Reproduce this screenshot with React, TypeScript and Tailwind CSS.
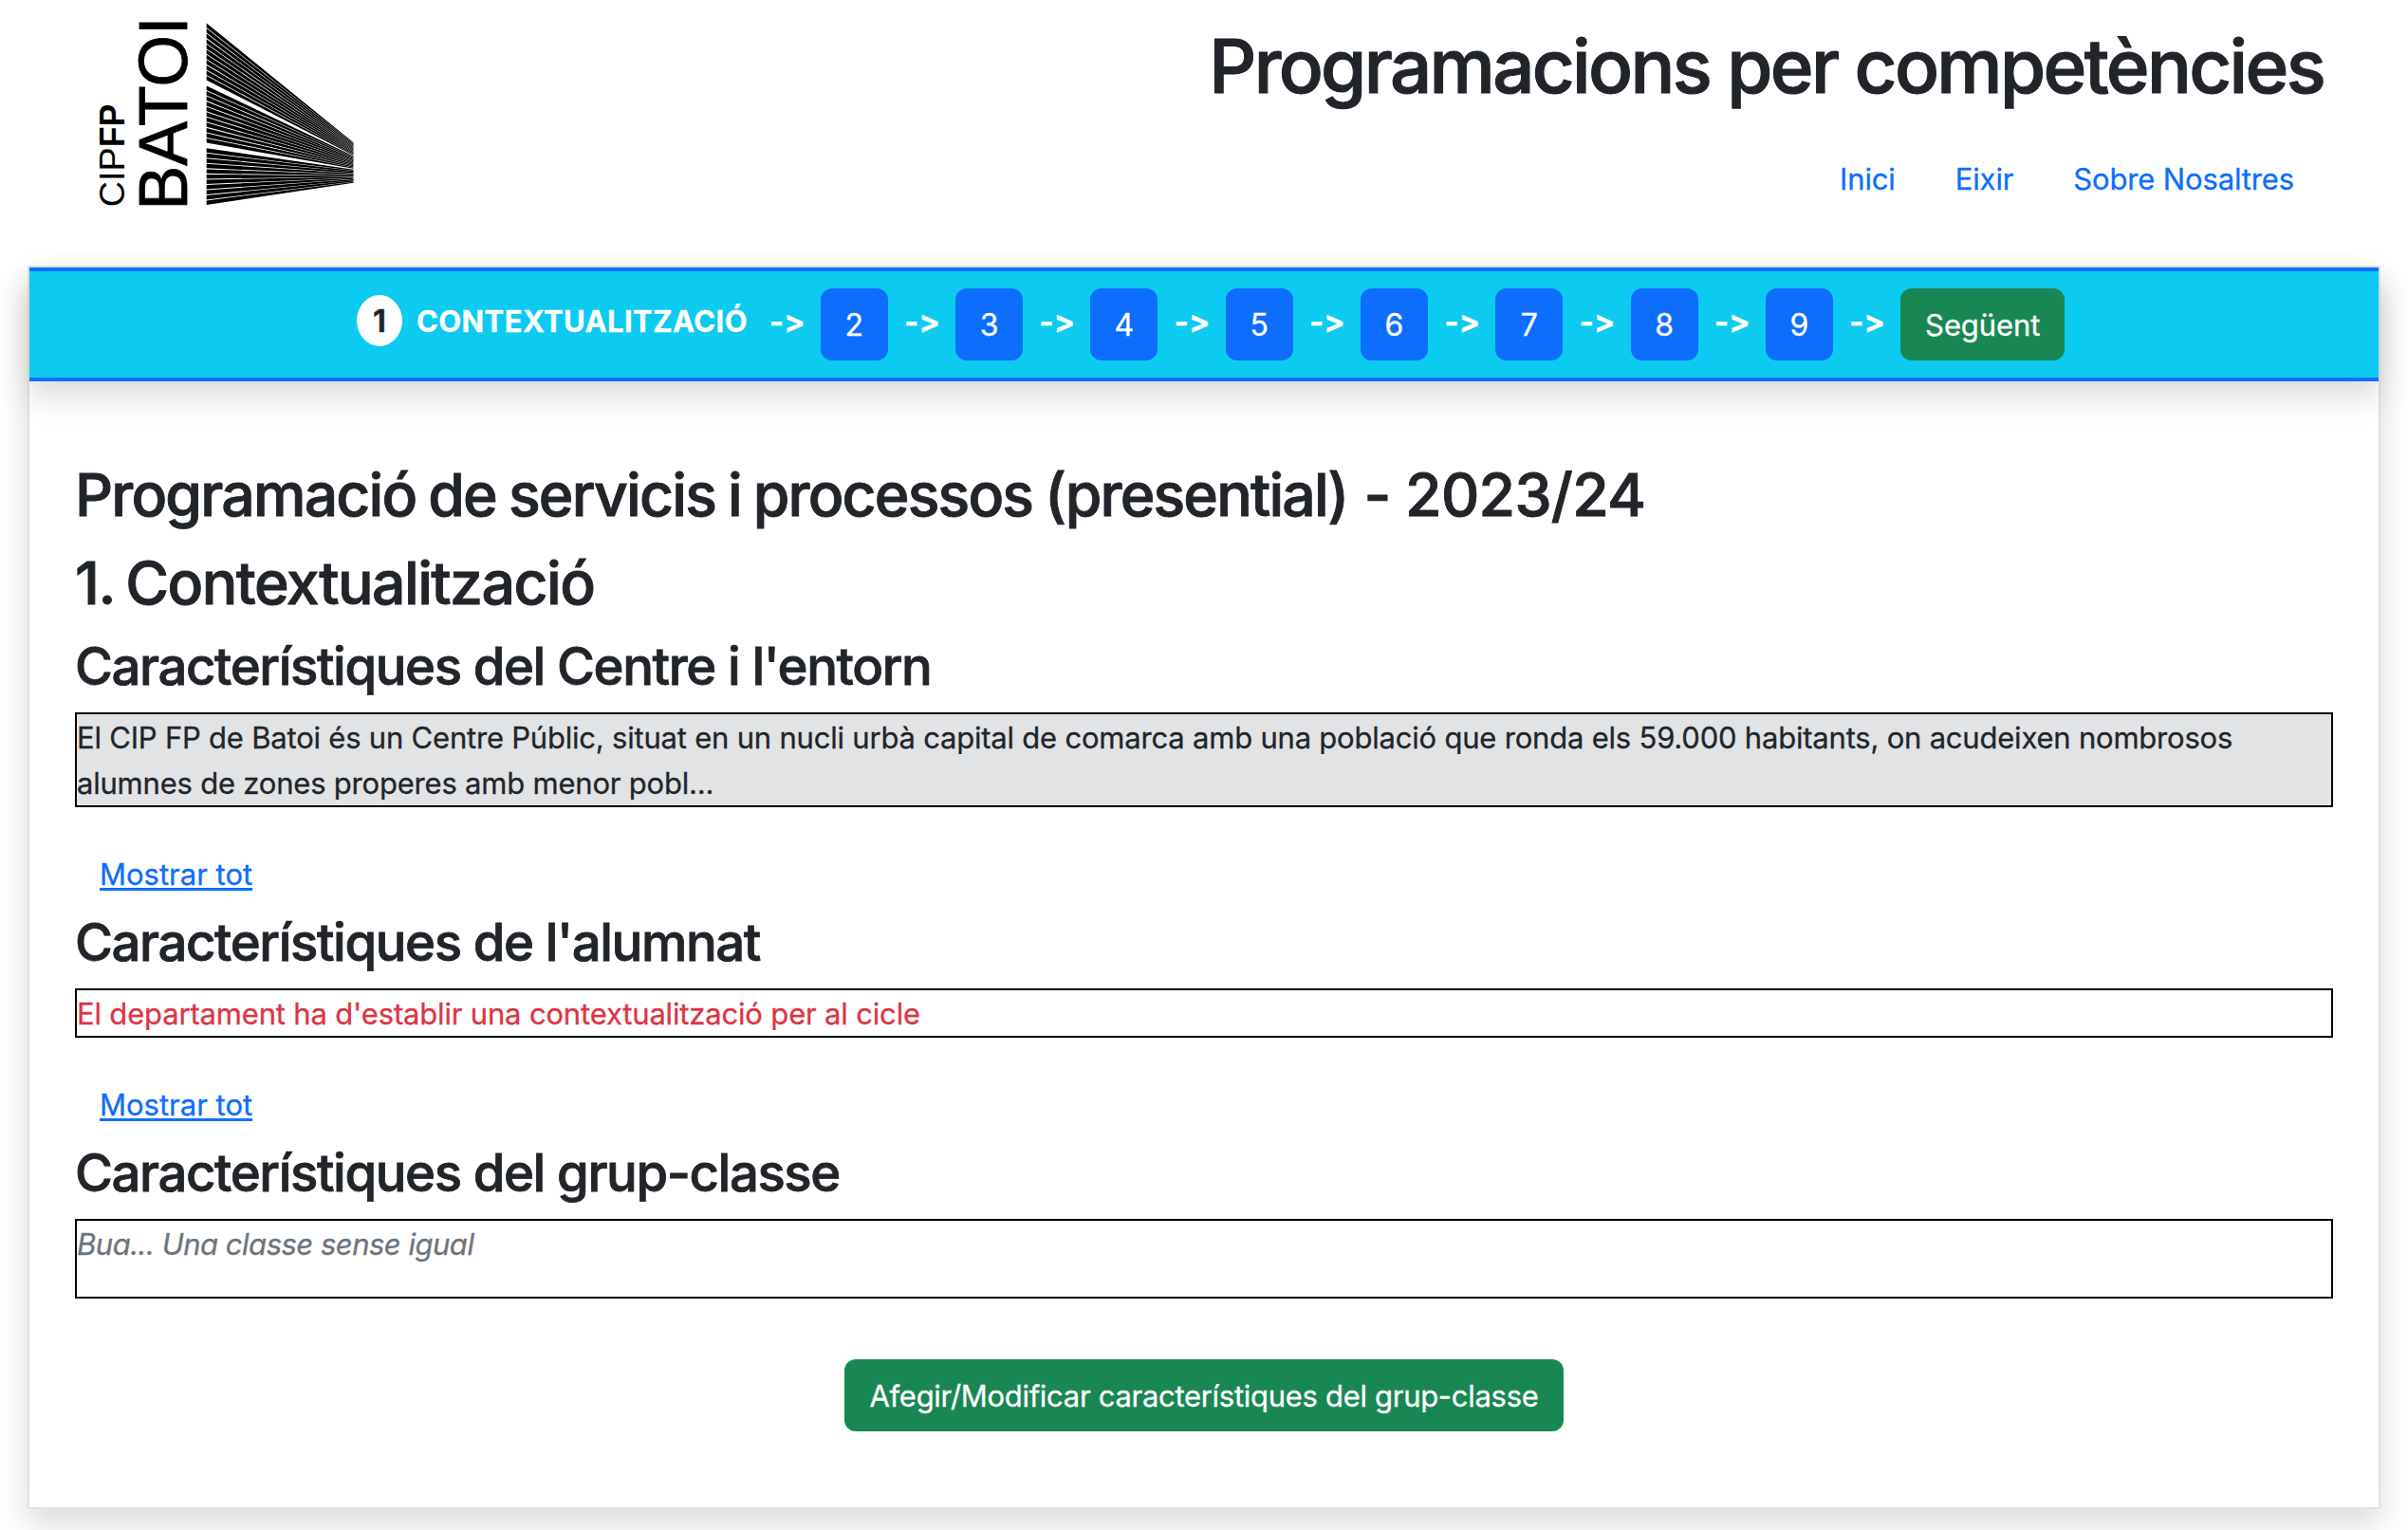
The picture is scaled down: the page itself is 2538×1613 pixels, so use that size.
import React from 'react';

const STRIPES_PER_BLOCK = 11;

// Each block of the fan: left edge top/bottom and right edge top/bottom.
const FAN_BLOCKS = [
  { leftTop: 24.5, leftBottom: 84.5, rightTop: 150.3, rightBottom: 163.8 },
  { leftTop: 90.5, leftBottom: 150.5, rightTop: 164.4, rightBottom: 177.8 },
  { leftTop: 156.3, leftBottom: 216, rightTop: 178.8, rightBottom: 192.7 },
];

function stripePoints(block: (typeof FAN_BLOCKS)[number], index: number) {
  const duty = 0.81;
  const span = STRIPES_PER_BLOCK - 1 + duty;
  const from = index / span;
  const to = (index + duty) / span;
  const at = (a: number, b: number, t: number) => (a + (b - a) * t).toFixed(2);
  return [
    `217.7,${at(block.leftTop, block.leftBottom, from)}`,
    `372.5,${at(block.rightTop, block.rightBottom, from)}`,
    `372.5,${at(block.rightTop, block.rightBottom, to)}`,
    `217.7,${at(block.leftTop, block.leftBottom, to)}`,
  ].join(' ');
}

function Logo() {
  return (
    <svg
      viewBox="90 0 300 240"
      className="ml-[90px] h-[240px] w-[300px]"
      fontFamily='"Liberation Sans", Arial, sans-serif'
      role="img"
      aria-label="CIPFP Batoi"
    >
      <g transform="translate(131.2 218.3) rotate(-90)" fontSize="37.5">
        <text textLength="63" lengthAdjust="spacingAndGlyphs">CIP</text>
        <text x="63" fontWeight="700" textLength="45.5" lengthAdjust="spacingAndGlyphs">FP</text>
      </g>
      <text
        transform="translate(197 221.5) rotate(-90)"
        fontSize="72"
        textLength="204"
        lengthAdjust="spacingAndGlyphs"
        stroke="black"
        strokeWidth="0.8"
      >
        BATOI
      </text>
      {FAN_BLOCKS.map((block) =>
        Array.from({ length: STRIPES_PER_BLOCK }, (_, i) => (
          <polygon key={`${block.leftTop}-${i}`} points={stripePoints(block, i)} />
        )),
      )}
    </svg>
  );
}

function Header() {
  return (
    <header className="flex h-[280px] justify-between">
      <Logo />
      <div className="flex flex-col items-end">
        <h1 className="mt-[22px] mr-[89px] text-[78px] leading-[96px] font-medium tracking-[-2.67px] whitespace-nowrap [-webkit-text-stroke:1.1px]">
          Programacions per competències
        </h1>
        <nav className="mt-[47px] mr-[120px] flex gap-[63px] text-[31px] leading-[48px] tracking-[-0.14px] text-[#0d6efd]">
          <a href="#">Inici</a>
          <a href="#">Eixir</a>
          <a href="#">Sobre Nosaltres</a>
        </nav>
      </div>
    </header>
  );
}

function Arrow() {
  return (
    <span className="mt-[29px] w-[71.3px] shrink-0 pl-px text-center text-[33px] leading-[48px] font-bold text-white">
      -&gt;
    </span>
  );
}

function Steps() {
  return (
    <div className="flex h-[120px] items-start border-y-4 border-[#0d6efd] bg-[#0dcaf0] pl-[345px] shadow-[0_16px_32px_rgba(0,0,0,0.15)]">
      <span className="mt-[25px] flex h-[54px] w-12 items-center justify-center rounded-[50%] bg-white pt-[2px] text-[32px] font-bold">
        1
      </span>
      <span className="mt-[29px] ml-[15px] w-[354.5px] shrink-0 text-[31px] leading-[48px] font-bold tracking-[0.385px] whitespace-nowrap text-white">
        CONTEXTUALITZACIÓ
      </span>
      <Arrow />
      {[2, 3, 4, 5, 6, 7, 8, 9].map((n) => (
        <React.Fragment key={n}>
          <button className="mt-[18px] h-[76px] w-[71px] shrink-0 rounded-xl bg-[#0d6efd] pt-[2px] text-[32px] text-white">
            {n}
          </button>
          <Arrow />
        </React.Fragment>
      ))}
      <button className="mt-[18px] h-[76px] w-[173px] shrink-0 rounded-xl bg-[#198754] pt-[2px] text-[31px] tracking-[-0.1px] text-white">
        Següent
      </button>
    </div>
  );
}

function SectionTitle({ children }: { children: React.ReactNode }) {
  return (
    <h3 className="mb-[15px] text-[54.5px] leading-[67.2px] font-medium tracking-[-1.41px] [-webkit-text-stroke:0.8px]">
      {children}
    </h3>
  );
}

function ShowAll() {
  return (
    <div className="mt-[47px] mb-[14px] pl-[26px] text-[31px] leading-[48px]">
      <a href="#" className="text-[#0d6efd] underline decoration-[3px] underline-offset-[3px]">
        Mostrar tot
      </a>
    </div>
  );
}

export default function App() {
  return (
    <div className="h-[1613px] w-[2538px] overflow-hidden bg-white font-['Inter',sans-serif] text-[#212529] [font-feature-settings:'calt'_0] [-webkit-text-stroke:0.3px]">
      <Header />
      <main className="mx-[29px] h-[1311px] border-2 border-[#dee2e6] bg-white shadow-[0_16px_32px_rgba(0,0,0,0.15)]">
        <Steps />
        <div className="px-12 pt-[81px]">
          <h2 className="mb-4 text-[62.5px] leading-[76.8px] font-medium tracking-[-1.83px] [word-spacing:-1.9px] [-webkit-text-stroke:0.9px]">
            Programació de servicis i processos (presential){' '}
            <span className="ml-[4px] tracking-[-0.7px] [word-spacing:-0.5px]">- 2023/24</span>
          </h2>
          <h2 className="mb-4 text-[62.5px] leading-[76.8px] font-medium tracking-[-1.54px] [word-spacing:-3px] [-webkit-text-stroke:0.9px]">
            1. Contextualització
          </h2>

          <SectionTitle>Característiques del Centre i l'entorn</SectionTitle>
          <p className="h-[100px] border-2 border-black bg-[#e2e3e5] pt-px text-[31px] leading-[48px] tracking-[-0.208px]">
            El CIP FP de Batoi és un Centre Públic, situat en un nucli urbà capital de comarca amb una
            població que ronda els 59.000 habitants, on acudeixen nombrosos
            <br />
            alumnes de zones properes amb menor pobl...
          </p>
          <ShowAll />

          <SectionTitle>Característiques de l'alumnat</SectionTitle>
          <p className="h-[52px] border-2 border-black pt-px text-[31px] leading-[48px] tracking-[-0.168px] text-[#dc3545]">
            El departament ha d'establir una contextualització per al cicle
          </p>
          <ShowAll />

          <SectionTitle>Característiques del grup-classe</SectionTitle>
          <p className="h-[84px] border-2 border-black pt-px text-[31px] leading-[48px] tracking-[-0.49px] text-[#6c757d] italic">
            Bua... Una classe sense igual
          </p>

          <div className="mt-16 flex justify-center">
            <button className="h-[76px] w-[758px] rounded-xl bg-[#198754] pt-[2px] text-[31px] tracking-[-0.295px] whitespace-nowrap text-white">
              Afegir/Modificar característiques del grup-classe
            </button>
          </div>
        </div>
      </main>
    </div>
  );
}
